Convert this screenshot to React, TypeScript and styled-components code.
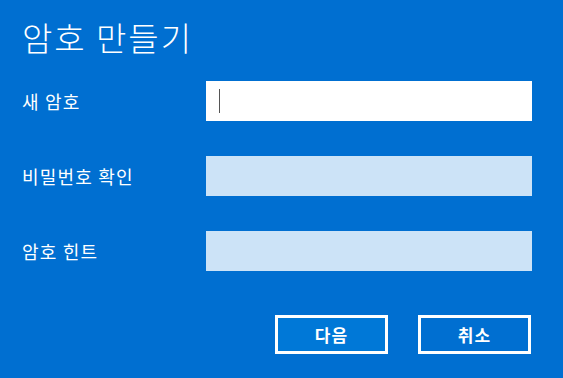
import React from "react";
import styled, { createGlobalStyle } from "styled-components";

const GlobalStyle = createGlobalStyle`
  html, body {
    margin: 0;
    padding: 0;
    background: #006fd1;
  }
  * {
    box-sizing: border-box;
  }
`;

const fields = [
  { label: "새 암호", active: true },
  { label: "비밀번호 확인", active: false },
  { label: "암호 힌트", active: false },
];

const App = () => {
  return (
    <>
      <GlobalStyle />
      <Dialog>
        <Title>암호 만들기</Title>
        <Form>
          {fields.map((f) => (
            <Row key={f.label}>
              <Label>{f.label}</Label>
              <Field $active={f.active}>{f.active && <Caret />}</Field>
            </Row>
          ))}
        </Form>
        <Actions>
          <Button $primary>다음</Button>
          <Button>취소</Button>
        </Actions>
      </Dialog>
    </>
  );
};

export default App;

const Dialog = styled.div`
  width: 563px;
  height: 378px;
  background: #006fd1;
  padding: 15px 31px 0 22px;
  display: flex;
  flex-direction: column;
  font-family: "Noto Sans CJK KR", "Noto Sans", sans-serif;
  color: #fff;
`;

const Title = styled.h1`
  margin: 0;
  font-size: 33px;
  font-weight: 300;
  letter-spacing: 2px;
  line-height: 44px;
`;

const Form = styled.div`
  margin-top: 22px;
  display: flex;
  flex-direction: column;
  gap: 35px;
`;

const Row = styled.div`
  display: flex;
  align-items: center;
`;

const Label = styled.div`
  width: 184px;
  font-size: 18px;
  font-weight: 400;
  letter-spacing: 1.2px;
`;

const Field = styled.div<{ $active?: boolean }>`
  flex: 1;
  height: 40px;
  background: ${(p) => (p.$active ? "#ffffff" : "#cce3f7")};
  display: flex;
  align-items: center;
  padding-left: 13px;
`;

const Caret = styled.span`
  width: 1px;
  height: 24px;
  background: #555;
`;

const Actions = styled.div`
  margin-top: 44px;
  display: flex;
  justify-content: flex-end;
  gap: 30px;
  padding-right: 1px;
`;

const Button = styled.button<{ $primary?: boolean }>`
  width: 113px;
  height: 39px;
  border: 3px solid #fff;
  background: ${(p) => (p.$primary ? "#0078d7" : "#006fd1")};
  color: #fff;
  font-family: "Noto Sans CJK KR", "Noto Sans", sans-serif;
  font-size: 17px;
  font-weight: 700;
  letter-spacing: 1px;
  padding: 0;
  line-height: 1;
`;
